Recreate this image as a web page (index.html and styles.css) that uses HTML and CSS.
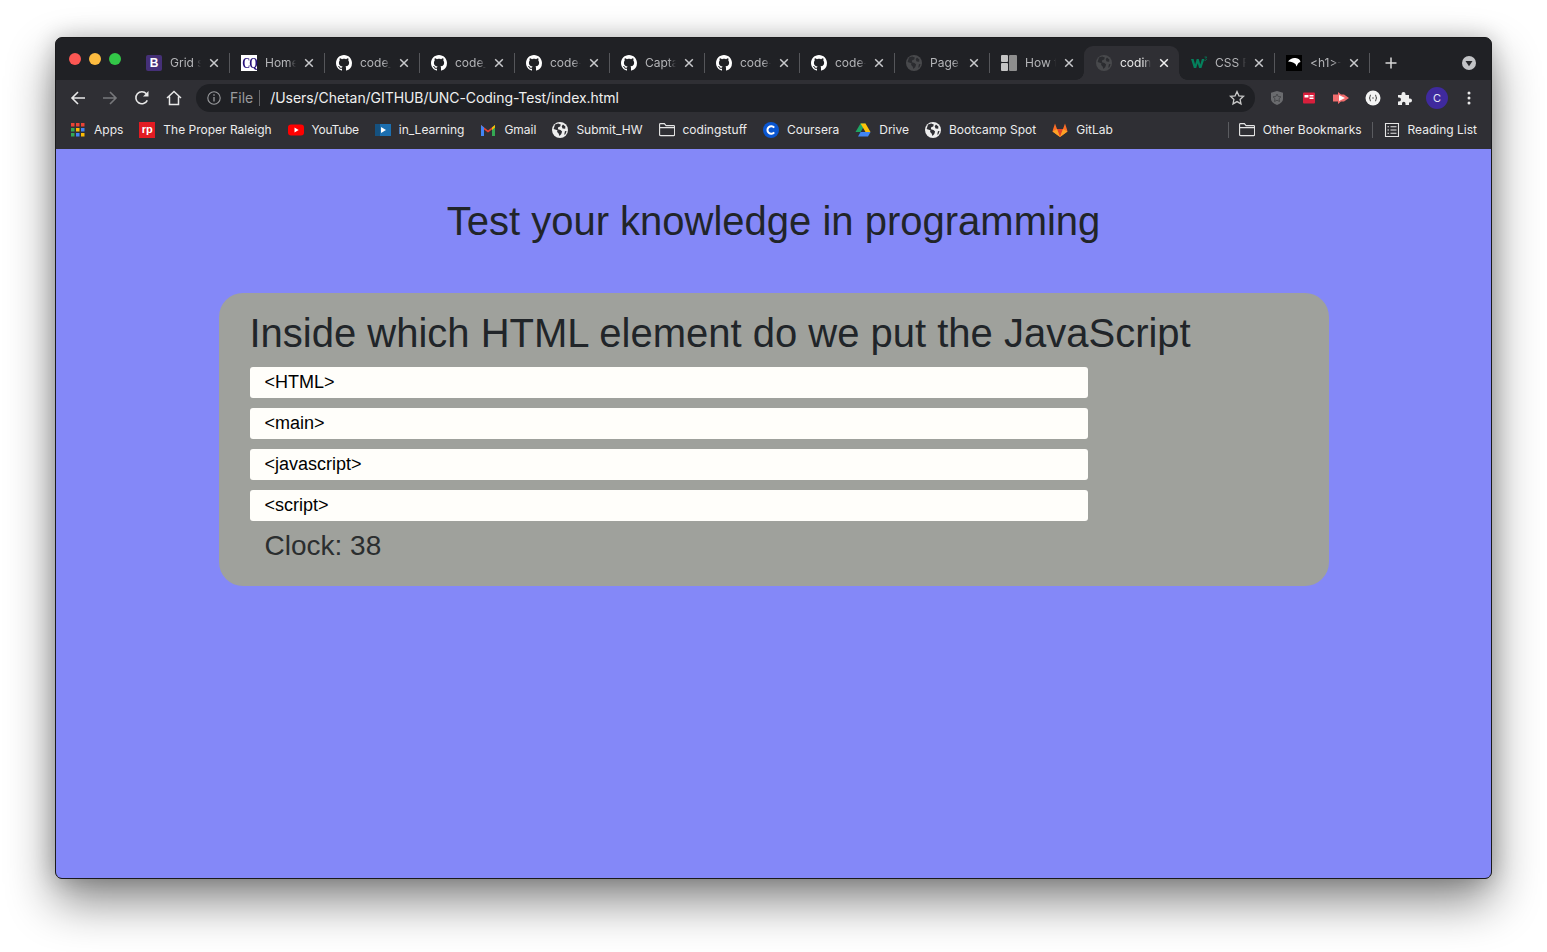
FILE: index.html
```html
<!DOCTYPE html>
<html lang="en">
<head>
<meta charset="utf-8">
<title>Coding Test</title>
<link rel="stylesheet" href="styles.css">
</head>
<body>
<svg class="defs" width="0" height="0" aria-hidden="true">
  <symbol id="gh" viewBox="0 0 16 16"><path fill="#fff" d="M8 0C3.58 0 0 3.58 0 8c0 3.54 2.29 6.53 5.47 7.59.4.07.55-.17.55-.38 0-.19-.01-.82-.01-1.49-2.01.37-2.53-.49-2.69-.94-.09-.23-.48-.94-.82-1.13-.28-.15-.68-.52-.01-.53.63-.01 1.08.58 1.23.82.72 1.21 1.87.87 2.33.66.07-.52.28-.87.51-1.07-1.78-.2-3.64-.89-3.64-3.95 0-.87.31-1.59.82-2.15-.08-.2-.36-1.02.08-2.12 0 0 .67-.21 2.2.82.64-.18 1.32-.27 2-.27.68 0 1.36.09 2 .27 1.53-1.04 2.2-.82 2.2-.82.44 1.1.16 1.92.08 2.12.51.56.82 1.27.82 2.15 0 3.07-1.87 3.75-3.65 3.95.29.25.54.73.54 1.48 0 1.07-.01 1.93-.01 2.2 0 .21.15.46.55.38A8.013 8.013 0 0016 8c0-4.42-3.58-8-8-8z"/></symbol>
  <symbol id="x" viewBox="0 0 10 10"><path d="M1.200 1.200l7.600 7.600M8.800 1.200L1.200 8.800" stroke="currentColor" stroke-width="1.500" fill="none"/></symbol>
  <symbol id="globe" viewBox="0 0 16 16"><circle cx="8" cy="8" r="8" fill="currentColor"/><path fill="var(--land)" d="M3 2.600l3.200-1.100 2.600 1-.6 2.100-2 .7-.3 2 2.600.6 1.600 1.600-.8 2.400-1.800 2.200-.9-2.600-1.500-1.500.3-1.700L1.600 7zM11 2.400l2.400 2-.2 2.400-2.700-.4-.8-2.200zM13 9l1.600.2-1.200 3-1.200.6z"/></symbol>
  <symbol id="folder" viewBox="0 0 16 14"><path d="M.6 12.600V1.400q0-.8.8-.8h4l1.600 2h7.600q1 0 1 1v8q0 1-1 1H1.600q-1 0-1-1zM.6 4.600h14.800" fill="none" stroke="#e6e6e6" stroke-width="1.100"/></symbol>
</svg>

<div class="window">
  <div class="tabbar">
    <div class="lights"><i class="light red"></i><i class="light amber"></i><i class="light green"></i></div>
    <div class="tabs">
      <div class="tab sep"><span class="fav boot">B</span><span class="title">Grid s</span><svg class="close"><use href="#x"/></svg></div>
      <div class="tab sep"><span class="fav cq"><span class="cq-mark">CQ</span></span><span class="title">Home</span><svg class="close"><use href="#x"/></svg></div>
      <div class="tab sep"><svg class="fav"><use href="#gh"/></svg><span class="title">code_</span><svg class="close"><use href="#x"/></svg></div>
      <div class="tab sep"><svg class="fav"><use href="#gh"/></svg><span class="title">code_</span><svg class="close"><use href="#x"/></svg></div>
      <div class="tab sep"><svg class="fav"><use href="#gh"/></svg><span class="title">code-</span><svg class="close"><use href="#x"/></svg></div>
      <div class="tab sep"><svg class="fav"><use href="#gh"/></svg><span class="title">Capta</span><svg class="close"><use href="#x"/></svg></div>
      <div class="tab sep"><svg class="fav"><use href="#gh"/></svg><span class="title">code-</span><svg class="close"><use href="#x"/></svg></div>
      <div class="tab sep"><svg class="fav"><use href="#gh"/></svg><span class="title">code-</span><svg class="close"><use href="#x"/></svg></div>
      <div class="tab sep"><svg class="fav dimglobe"><use href="#globe"/></svg><span class="title">Page</span><svg class="close"><use href="#x"/></svg></div>
      <div class="tab"><svg class="fav" viewBox="0 0 16 16"><rect width="7" height="7" rx="1" fill="#c4c4c4"/><rect y="8" width="7" height="8" rx="1" fill="#c4c4c4"/><rect x="8" width="8" height="16" rx="1" fill="#8e8e8e"/></svg><span class="title">How t</span><svg class="close"><use href="#x"/></svg></div>
      <div class="tab active"><svg class="fav dimglobe"><use href="#globe"/></svg><span class="title">codin</span><svg class="close"><use href="#x"/></svg></div>
      <div class="tab sep"><svg class="fav" viewBox="0 0 16 16"><path fill="#04805c" d="M0 4h2.600l1.500 5.400L5.700 4h2l1.600 5.400L10.900 4h2.500l-3 9H8.100L6.700 8.200 5.200 13H2.900z"/><path d="M13.500 2h2.200l-1.100 1.300q1 .4.800 1.300-.3 1-1.900.8" fill="none" stroke="#04805c" stroke-width=".8"/></svg><span class="title">CSS F</span><svg class="close"><use href="#x"/></svg></div>
      <div class="tab sep"><svg class="fav" viewBox="0 0 16 16"><rect width="16" height="16" fill="#000"/><path fill="#fff" d="M2 6.500Q5 2.500 9.500 3t5 4q-1.500 0-2.500 1.500l-1.500 3-1-2.500-2.500-1.500Q4.500 6.500 2 6.500z"/></svg><span class="title">&lt;h1&gt;-</span><svg class="close"><use href="#x"/></svg></div>
    </div>
    <svg class="newtab" viewBox="0 0 12 12"><path d="M6 .5v11M.5 6h11" stroke="#d8d8d8" stroke-width="1.500"/></svg>
    <svg class="tabmenu" viewBox="0 0 14 14"><circle cx="7" cy="7" r="7" fill="#c2c3c6"/><path d="M3.500 5h7L7 10.200z" fill="#26272b"/></svg>
  </div>

  <div class="toolbar">
    <svg class="tool" viewBox="0 0 16 16"><path d="M15 8H2M8 2L2 8l6 6" fill="none" stroke="#e8e8e8" stroke-width="1.600"/></svg>
    <svg class="tool" viewBox="0 0 16 16"><path d="M1 8h13M8 2l6 6-6 6" fill="none" stroke="#77787b" stroke-width="1.600"/></svg>
    <svg class="tool" viewBox="0 0 16 16"><path d="M13.300 10.400A6 6 0 1 1 12.400 3.800" fill="none" stroke="#e8e8e8" stroke-width="1.600"/><path d="M14.500 1v5.500H9z" fill="#e8e8e8"/></svg>
    <svg class="tool" viewBox="0 0 16 16"><path d="M1 8l7-6.500L15 8M3.500 6.500v8h9v-8" fill="none" stroke="#e8e8e8" stroke-width="1.500"/></svg>
    <div class="omnibox">
      <svg class="info" viewBox="0 0 14 14"><circle cx="7" cy="7" r="6.200" fill="none" stroke="#9a9b9e" stroke-width="1.100"/><path d="M7 6v4.500M7 3.300v1.400" stroke="#9a9b9e" stroke-width="1.300"/></svg>
      <span class="scheme">File</span>
      <span class="divider"></span>
      <span class="url">/Users/Chetan/GITHUB/UNC-Coding-Test/index.html</span>
      <svg class="star" viewBox="0 0 16 16"><path d="M8 1.600l1.900 4.200 4.600.5-3.400 3.100.9 4.500L8 11.600l-4 2.300.9-4.500L1.500 6.300l4.600-.5z" fill="none" stroke="#c8c8c8" stroke-width="1.300"/></svg>
    </div>
    <div class="exts">
      <svg class="tool" viewBox="0 0 16 16"><path d="M8 1l6 1.800v6.200q0 3.500-6 6-6-2.500-6-6V2.800z" fill="#6a6b6e"/><path d="M8 4l1.200 2.500 2.800.3-2 1.900.5 2.800L8 10.200l-2.500 1.300.5-2.800-2-1.900 2.800-.3z" fill="none" stroke="#48494c"/></svg>
      <svg class="tool" viewBox="0 0 16 16"><rect x="2" y="2.500" width="12" height="11" rx="1" fill="#d81f3c"/><rect x="3.500" y="5" width="4" height="2.500" fill="#fff"/><rect x="8.500" y="5" width="4" height="1.500" fill="#fff"/><rect x="8.500" y="7.500" width="4" height="1.500" fill="#fff"/></svg>
      <svg class="tool" viewBox="0 0 16 16"><path d="M0 4.500h5V2l3 2.500h3L16 8l-5 3.500H8L5 14v-2.500H0z" fill="#f26d6d"/><path d="M6 5l6 3-6 3z" fill="#fff"/></svg>
      <svg class="tool" viewBox="0 0 16 16"><circle cx="8" cy="8" r="7.500" fill="#f4f4f4"/><path d="M6 5Q4.600 5 5 7q0 1-1 1 1 0 1 1-.4 2 1 2M10 5q1.400 0 1 2 0 1 1 1-1 0-1 1 .4 2-1 2M7.200 8h1.600" fill="none" stroke="#222" stroke-width=".8"/></svg>
      <svg class="tool" viewBox="0 0 16 16"><path fill="#eee" d="M1 5h3.500V4a2 2 0 1 1 4 0v1H12v3.500h1a2 2 0 1 1 0 4h-1V15H8.500v-1.500a1.700 1.700 0 1 0-3.500 0V15H1v-3.500h1a2 2 0 1 0 0-4H1z"/></svg>
      <span class="avatar">C</span>
      <svg class="tool" viewBox="0 0 16 16"><circle cx="8" cy="3" r="1.500" fill="#e8e8e8"/><circle cx="8" cy="8" r="1.500" fill="#e8e8e8"/><circle cx="8" cy="13" r="1.500" fill="#e8e8e8"/></svg>
    </div>
  </div>

  <div class="bookmarks">
    <a class="bm"><svg class="bmicon appsicon" viewBox="0 0 14 14"><rect width="3.500" height="3.500" fill="#ea4335"/><rect x="5" width="3.500" height="3.500" fill="#ea4335"/><rect x="10" width="3.500" height="3.500" fill="#ea4335"/><rect y="5" width="3.500" height="3.500" fill="#34a853"/><rect x="5" y="5" width="3.500" height="3.500" fill="#fbbc04"/><rect x="10" y="5" width="3.500" height="3.500" fill="#4285f4"/><rect y="10" width="3.500" height="3.500" fill="#34a853"/><rect x="5" y="10" width="3.500" height="3.500" fill="#4285f4"/><rect x="10" y="10" width="3.500" height="3.500" fill="#fbbc04"/></svg>Apps</a>
    <a class="bm"><span class="bmicon rp">rp</span>The Proper Raleigh</a>
    <a class="bm tight"><svg class="bmicon" viewBox="0 0 16 16"><rect y="2.500" width="16" height="11" rx="3" fill="#f00"/><path d="M6.500 5.600L10.700 8l-4.200 2.400z" fill="#fff"/></svg>YouTube</a>
    <a class="bm"><svg class="bmicon" viewBox="0 0 16 16"><rect y="2" width="16" height="12" fill="#1c6fb0"/><rect y="2" width="5" height="12" fill="#15517f"/><path d="M6 5l5 3-5 3z" fill="#fff"/></svg>in_Learning</a>
    <a class="bm"><svg class="bmicon" viewBox="0 0 16 16"><path d="M1 14V3l7 5.500L15 3v11h-3V7.500L8 10.500 4 7.500V14z" fill="#ea4335"/><path d="M1 14V3l3 2.500V14z" fill="#4285f4"/><path d="M15 14V3l-3 2.500V14z" fill="#34a853"/><path d="M12 5.500L15 3v2.500l-3 2.500z" fill="#fbbc04"/></svg>Gmail</a>
    <a class="bm"><svg class="bmicon lightglobe"><use href="#globe"/></svg>Submit_HW</a>
    <a class="bm"><svg class="bmicon"><use href="#folder"/></svg>codingstuff</a>
    <a class="bm"><svg class="bmicon" viewBox="0 0 16 16"><circle cx="8" cy="8" r="8" fill="#0a56d1"/><path d="M11.200 5.600A3.800 3.800 0 1 0 11.200 10.400" fill="none" stroke="#fff" stroke-width="2"/></svg>Coursera</a>
    <a class="bm"><svg class="bmicon" viewBox="0 0 16 16"><path d="M5.500 1.500h5L8 6 5.600 10H.5z" fill="#1fa463"/><path d="M5.500 1.500h5l5 8.500h-5z" fill="#ffc107"/><path d="M3 14.500L5.600 10h10l-2.600 4.500z" fill="#4285f4"/></svg>Drive</a>
    <a class="bm"><svg class="bmicon lightglobe"><use href="#globe"/></svg>Bootcamp Spot</a>
    <a class="bm"><svg class="bmicon" viewBox="0 0 16 16"><path d="M8 15L.5 9.500 1 7.500 3 1.500 5 7h6l2-5.500 2 6 .5 2z" fill="#fc6d26"/><path d="M8 15L5 7h6z" fill="#e24329"/><path d="M.5 9.500L5 7l3 8zM15.500 9.500L11 7l-3 8z" fill="#fca326"/></svg>GitLab</a>
    <div class="bm-right">
      <span class="bm-sep"></span>
      <a class="bm"><svg class="bmicon"><use href="#folder"/></svg>Other Bookmarks</a>
      <span class="bm-sep"></span>
      <a class="bm reading"><svg class="bmicon" viewBox="0 0 16 16"><path d="M1.500 1.500h13v13h-13zM6.500 4.700h6M6.500 8h6M6.500 11.300h6M3.500 4.700h1.500M3.500 8h1.500M3.500 11.300h1.500" fill="none" stroke="#e6e6e6" stroke-width="1.100"/></svg>Reading List</a>
    </div>
  </div>

  <main class="page">
    <h1 class="heading">Test your knowledge in programming</h1>
    <section class="card">
      <h2 class="question">Inside which HTML element do we put the JavaScript</h2>
      <ul class="options">
        <li class="option">&lt;HTML&gt;</li>
        <li class="option">&lt;main&gt;</li>
        <li class="option">&lt;javascript&gt;</li>
        <li class="option">&lt;script&gt;</li>
      </ul>
      <p class="clock">Clock: 38</p>
    </section>
  </main>
</div>
</body>
</html>
```
FILE: styles.css
```css
* { box-sizing: border-box; }
html, body { margin: 0; height: 100%; }
body {
  background: #fff;
  overflow: hidden;
  padding: 37px 55px 0;
  font-family: "Liberation Sans", Arial, sans-serif;
}
.defs { position: absolute; }

.window {
  height: 842px;
  display: flex;
  flex-direction: column;
  border: 1px solid #1a1a1c;
  border-radius: 7px;
  background: #202124;
  box-shadow: 0 22px 48px rgba(0, 0, 0, .48), 0 0 22px rgba(0, 0, 0, .2);
}

.tabbar {
  height: 42px;
  flex: none;
  display: flex;
  align-items: flex-end;
  background: #202125;
  border-radius: 6px 6px 0 0;
}
.lights {
  width: 78px;
  height: 42px;
  padding: 15px 0 0 13px;
  display: flex;
  gap: 8px;
  flex: none;
}
.light { width: 12px; height: 12px; border-radius: 50%; }
.red { background: #fc5753; }
.amber { background: #fdbc40; }
.green { background: #33c748; }

.tabs { display: flex; }
.tab {
  width: 95px;
  height: 34px;
  padding: 0 0 0 12px;
  display: flex;
  align-items: center;
  position: relative;
  color: #b4b5b8;
  font: 12px/16px Inter, "Liberation Sans", sans-serif;
}
.sep::after {
  content: "";
  position: absolute;
  right: -1px;
  top: 7px;
  height: 20px;
  width: 1px;
  background: #55565a;
}
.active {
  background: #2f2f34;
  color: #e8e8e8;
  border-radius: 9px 9px 0 0;
}
.active::before,
.active::after {
  content: "";
  position: absolute;
  bottom: 0;
  width: 8px;
  height: 8px;
}
.active::before {
  left: -8px;
  background: radial-gradient(circle at 0 0, transparent 7.5px, #2f2f34 8px);
}
.active::after {
  right: -8px;
  background: radial-gradient(circle at 100% 0, transparent 7.5px, #2f2f34 8px);
}
.fav { width: 16px; height: 16px; flex: none; display: block; }
.boot {
  background: #453078;
  color: #fff;
  border-radius: 2px;
  font: 700 12px/16px "Liberation Sans", sans-serif;
  text-align: center;
}
.cq {
  background: #fff;
  color: #27127a;
  font: 700 13px/16px "Liberation Serif", serif;
  text-align: center;
  letter-spacing: -1px;
}
.cq-mark { display: block; transform: scale(.85, 1.2); }
.dimglobe { color: #48494c; --land: #2b2c30; }
.lightglobe { color: #eee; --land: #2f2f34; }
.title {
  width: 33px;
  margin-left: 8px;
  white-space: nowrap;
  -webkit-mask-image: linear-gradient(90deg, #000 70%, transparent 94%);
  mask-image: linear-gradient(90deg, #000 70%, transparent 94%);
}
.close { width: 10px; height: 10px; margin-left: 6px; flex: none; color: #c8c9cc; }
.active .close { color: #f0f0f0; }

.newtab { width: 12px; height: 12px; flex: none; margin: 0 0 11px 16px; }
.tabmenu { width: 14px; height: 14px; flex: none; margin: 0 15px 10px auto; }

.toolbar {
  height: 32px;
  flex: none;
  display: flex;
  align-items: flex-start;
  background: #2f2f34;
  padding: 4px 0 0 14px;
}
.toolbar > .tool { margin: 6px 16px 0 0; }
.tool { width: 16px; height: 16px; flex: none; display: block; }
.omnibox {
  width: 1059px;
  height: 28px;
  margin-left: -2px;
  flex: none;
  display: flex;
  align-items: center;
  border-radius: 14px;
  background: #1f2024;
  padding: 0 10px 0 11px;
  font: 14px/18px Inter, "Liberation Sans", sans-serif;
}
.info { width: 14px; height: 14px; flex: none; }
.scheme { margin-left: 9px; color: #9a9b9e; }
.divider { width: 1px; height: 16px; margin: 0 10px 0 6px; background: #66676a; }
.url { color: #f0f0f0; flex: 1; letter-spacing: -.06px; }
.star { width: 16px; height: 16px; flex: none; }
.exts {
  display: flex;
  align-items: center;
  height: 28px;
  gap: 16px;
  margin-left: 14px;
}
.avatar {
  width: 22px;
  height: 22px;
  margin: 0 -3px;
  flex: none;
  border-radius: 50%;
  background: #3f2a9e;
  color: #e6e6f5;
  text-align: center;
  font: 11px/22px Inter, sans-serif;
}

.bookmarks {
  height: 37px;
  flex: none;
  display: flex;
  align-items: center;
  gap: 16px;
  padding: 0 14px 1px 15px;
  background: #2f2f34;
  color: #ececec;
  font: 12px/16px Inter, "Liberation Sans", sans-serif;
}
.bm { display: flex; align-items: center; gap: 8px; white-space: nowrap; }
.tight { letter-spacing: -.3px; }
.reading { margin-left: 1px; }
.bmicon { width: 16px; height: 16px; flex: none; display: block; }
.appsicon { width: 14px; height: 14px; margin-right: 1px; }
.rp {
  background: #e31b23;
  color: #fff;
  text-align: center;
  font: 700 11px/15px "Liberation Sans", sans-serif;
}
.bm-right { margin-left: auto; display: flex; align-items: center; gap: 10px; }
.bm-sep { width: 1px; height: 16px; background: #5b5c60; }

.page {
  flex: 1;
  background: #8488f8;
  border-radius: 0 0 6px 6px;
  padding-top: 49px;
}
.heading {
  margin: 0;
  text-align: center;
  font-size: 40px;
  line-height: 46px;
  font-weight: 400;
  color: #212529;
}
.card {
  width: 1110px;
  height: 293px;
  margin: 49px auto 0;
  padding: 17px 31px 0;
  border-radius: 24px;
  background: #9fa19c;
}
.question {
  margin: 0 0 11px;
  font-size: 40px;
  line-height: 46px;
  font-weight: 400;
  color: #212529;
  white-space: nowrap;
}
.options {
  list-style: none;
  margin: 0;
  padding: 0;
  width: 838px;
  display: flex;
  flex-direction: column;
  gap: 10px;
}
.option {
  height: 31px;
  padding-left: 15px;
  background: #fffefa;
  border-radius: 3px;
  color: #000;
  font-size: 18px;
  line-height: 30px;
}
.clock {
  margin: 8px 0 0 15px;
  font-size: 28px;
  line-height: 33px;
  color: #2b2e2f;
}
```
